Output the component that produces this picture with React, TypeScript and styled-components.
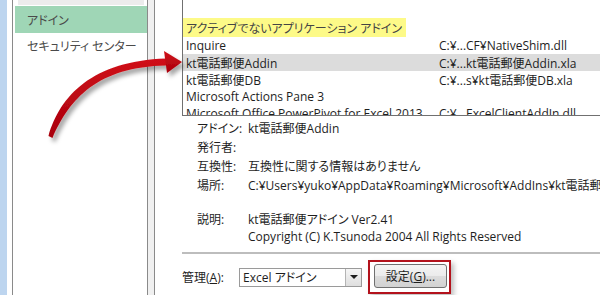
import React from "react";
import styled, { createGlobalStyle } from "styled-components";

const Global = createGlobalStyle`
  html, body { margin: 0; padding: 0; background: #fff; }
  body { width: 600px; height: 295px; overflow: hidden; }
  * { box-sizing: border-box; }
`;

const FONT = `"Open Sans", "Noto Sans CJK JP", sans-serif`;

const Page = styled.div`
  position: relative;
  width: 600px;
  height: 295px;
  display: flex;
  overflow: hidden;
  font-family: ${FONT};
  font-size: 12px;
  font-feature-settings: "palt" 1;
  color: #1e1e1e;
  background: #fff;
`;

const BlueStrip = styled.div`
  width: 7px;
  background: #bdd5ef;
  flex: none;
`;

const Spacer = styled.div<{ $w: number; $bg: string }>`
  width: ${(p) => p.$w}px;
  background: ${(p) => p.$bg};
  flex: none;
`;

const Sidebar = styled.div`
  width: 136px;
  flex: none;
  border-left: 1px solid #8a8a8a;
  border-right: 1px solid #8a8a8a;
  background: #fff;
  display: flex;
  flex-direction: column;
`;

const TopStub = styled.div`
  height: 5px;
  margin: 0 3px 1px 5px;
  background: #ececec;
`;

const NavItem = styled.div<{ $active?: boolean }>`
  height: ${(p) => (p.$active ? 27 : 25)}px;
  margin-left: 2px;
  padding-left: 12px;
  display: flex;
  align-items: center;
  background: ${(p) => (p.$active ? "#9fd6b6" : "transparent")};
  color: #4a4a4a;
  font-size: 12px;
  white-space: nowrap;
`;

const Main = styled.div`
  flex: 1;
  border-left: 1px solid #8a8a8a;
  padding-left: 27px;
  display: flex;
  flex-direction: column;
  min-width: 0;
`;

const ListBox = styled.div`
  height: 116px;
  border-left: 1px solid #707070;
  border-bottom: 1px solid #707070;
  display: flex;
  flex-direction: column;
  overflow: hidden;
  margin-right: -20px;
`;

const ListTopGap = styled.div`
  height: 18px;
  flex: none;
`;

const GroupHeader = styled.div`
  height: 19px;
  flex: none;
  display: flex;
  align-items: center;
  align-self: flex-start;
  width: 223px;
  padding-left: 3px;
  background: #fdfa88;
  color: #444;
  white-space: nowrap;
`;

const Row = styled.div<{ $sel?: boolean }>`
  height: 17px;
  flex: none;
  display: flex;
  align-items: center;
  padding-left: 3px;
  background: ${(p) => (p.$sel ? "#dcdcdc" : "transparent")};
  white-space: nowrap;
`;

const NameCell = styled.div`
  width: 253px;
  flex: none;
  overflow: hidden;
`;

const PathCell = styled.div`
  flex: none;
`;

const Details = styled.div`
  padding-top: 3px;
  padding-left: 15px;
  display: flex;
  flex-direction: column;
`;

const DetailRow = styled.div<{ $gap?: number; $lh?: number }>`
  display: flex;
  line-height: ${(p) => p.$lh ?? 19}px;
  margin-top: ${(p) => p.$gap ?? 0}px;
  white-space: nowrap;
`;

const DLabel = styled.div`
  width: 51px;
  flex: none;
`;

const DValue = styled.div``;

const Separator = styled.div`
  height: 2px;
  margin-top: 7px;
  background: #bdbdbd;
  margin-right: -20px;
`;

const BottomRow = styled.div`
  margin-top: 6px;
  display: flex;
  align-items: center;
`;

const ManageLabel = styled.div`
  width: 57px;
  flex: none;
  white-space: nowrap;
`;

const U = styled.span`
  text-decoration: underline;
  text-underline-offset: 1px;
`;

const Select = styled.div`
  width: 123px;
  height: 19px;
  flex: none;
  border: 1px solid #9a9a9a;
  display: flex;
  align-items: center;
  padding-left: 3px;
  background: #fff;
  white-space: nowrap;
`;

const SelectText = styled.div`
  flex: 1;
`;

const SelectArrow = styled.div`
  width: 16px;
  height: 17px;
  border-left: 1px solid #b4b4b4;
  background: linear-gradient(#f6f6f6, #dedede);
  display: flex;
  align-items: center;
  justify-content: center;
  &::after {
    content: "";
    border-left: 4px solid transparent;
    border-right: 4px solid transparent;
    border-top: 4px solid #1e1e1e;
  }
`;

const RedFrame = styled.div`
  margin-left: 6px;
  padding: 2px 2px 4px 4px;
  border: 2px solid #b3121c;
  box-shadow: 3px 3px 5px rgba(0, 0, 0, 0.25);
  display: flex;
`;

const Button = styled.div`
  width: 73px;
  height: 24px;
  border: 1px solid #707070;
  border-radius: 3px;
  background: linear-gradient(#f4f4f4 0%, #ebebeb 50%, #dcdcdc 51%, #d2d2d2 100%);
  display: flex;
  align-items: center;
  justify-content: center;
  white-space: nowrap;
`;

const ArrowSvg = styled.svg`
  position: absolute;
  left: 0;
  top: 0;
  width: 200px;
  height: 160px;
  pointer-events: none;
`;

const rows = [
  { name: "Inquire", path: "C:¥...CF¥NativeShim.dll" },
  { name: "kt電話郵便Addin", path: "C:¥...kt電話郵便Addin.xla", sel: true },
  { name: "kt電話郵便DB", path: "C:¥...s¥kt電話郵便DB.xla" },
  { name: "Microsoft Actions Pane 3", path: "" },
  { name: "Microsoft Office PowerPivot for Excel 2013", path: "C:¥...ExcelClientAddIn.dll" },
];

export default function App() {
  return (
    <Page>
      <Global />
      <BlueStrip />
      <Spacer $w={5} $bg="#fff" />
      <Sidebar>
        <TopStub />
        <NavItem $active>アドイン</NavItem>
        <NavItem>セキュリティ センター</NavItem>
      </Sidebar>
      <Spacer $w={6} $bg="#f0f0f0" />
      <Main>
        <ListBox>
          <ListTopGap />
          <GroupHeader>アクティブでないアプリケーション アドイン</GroupHeader>
          {rows.map((r) => (
            <Row key={r.name} $sel={r.sel}>
              <NameCell>{r.name}</NameCell>
              <PathCell>{r.path}</PathCell>
            </Row>
          ))}
        </ListBox>
        <Details>
          <DetailRow>
            <DLabel>アドイン:</DLabel>
            <DValue>kt電話郵便Addin</DValue>
          </DetailRow>
          <DetailRow>
            <DLabel>発行者:</DLabel>
            <DValue />
          </DetailRow>
          <DetailRow>
            <DLabel>互換性:</DLabel>
            <DValue>互換性に関する情報はありません</DValue>
          </DetailRow>
          <DetailRow>
            <DLabel>場所:</DLabel>
            <DValue>C:¥Users¥yuko¥AppData¥Roaming¥Microsoft¥AddIns¥kt電話郵便Addin.xla</DValue>
          </DetailRow>
          <DetailRow $gap={16} $lh={17}>
            <DLabel>説明:</DLabel>
            <DValue>
              kt電話郵便アドイン Ver2.41
              <br />
              Copyright (C) K.Tsunoda 2004 All Rights Reserved
            </DValue>
          </DetailRow>
        </Details>
        <Separator />
        <BottomRow>
          <ManageLabel>
            管理(<U>A</U>):
          </ManageLabel>
          <Select>
            <SelectText>Excel アドイン</SelectText>
            <SelectArrow />
          </Select>
          <RedFrame>
            <Button>
              設定(<U>G</U>)...
            </Button>
          </RedFrame>
        </BottomRow>
      </Main>
      <ArrowSvg viewBox="0 0 200 160">
        <defs>
          <filter id="sh" x="-20%" y="-20%" width="140%" height="140%">
            <feDropShadow dx="3" dy="4" stdDeviation="2" floodColor="#000" floodOpacity="0.35" />
          </filter>
          <linearGradient id="rg" x1="0" y1="0" x2="0" y2="1">
            <stop offset="0" stopColor="#d0101a" />
            <stop offset="1" stopColor="#a8000c" />
          </linearGradient>
        </defs>
        <g filter="url(#sh)" fill="url(#rg)">
          <path d="M48.5,136 C60,96 92,61 166,58.5 L166,65.5 C98,67 70,98 52.5,138 Z" />
          <path d="M164,51 L182,62 L167,73 Z" />
        </g>
      </ArrowSvg>
    </Page>
  );
}
